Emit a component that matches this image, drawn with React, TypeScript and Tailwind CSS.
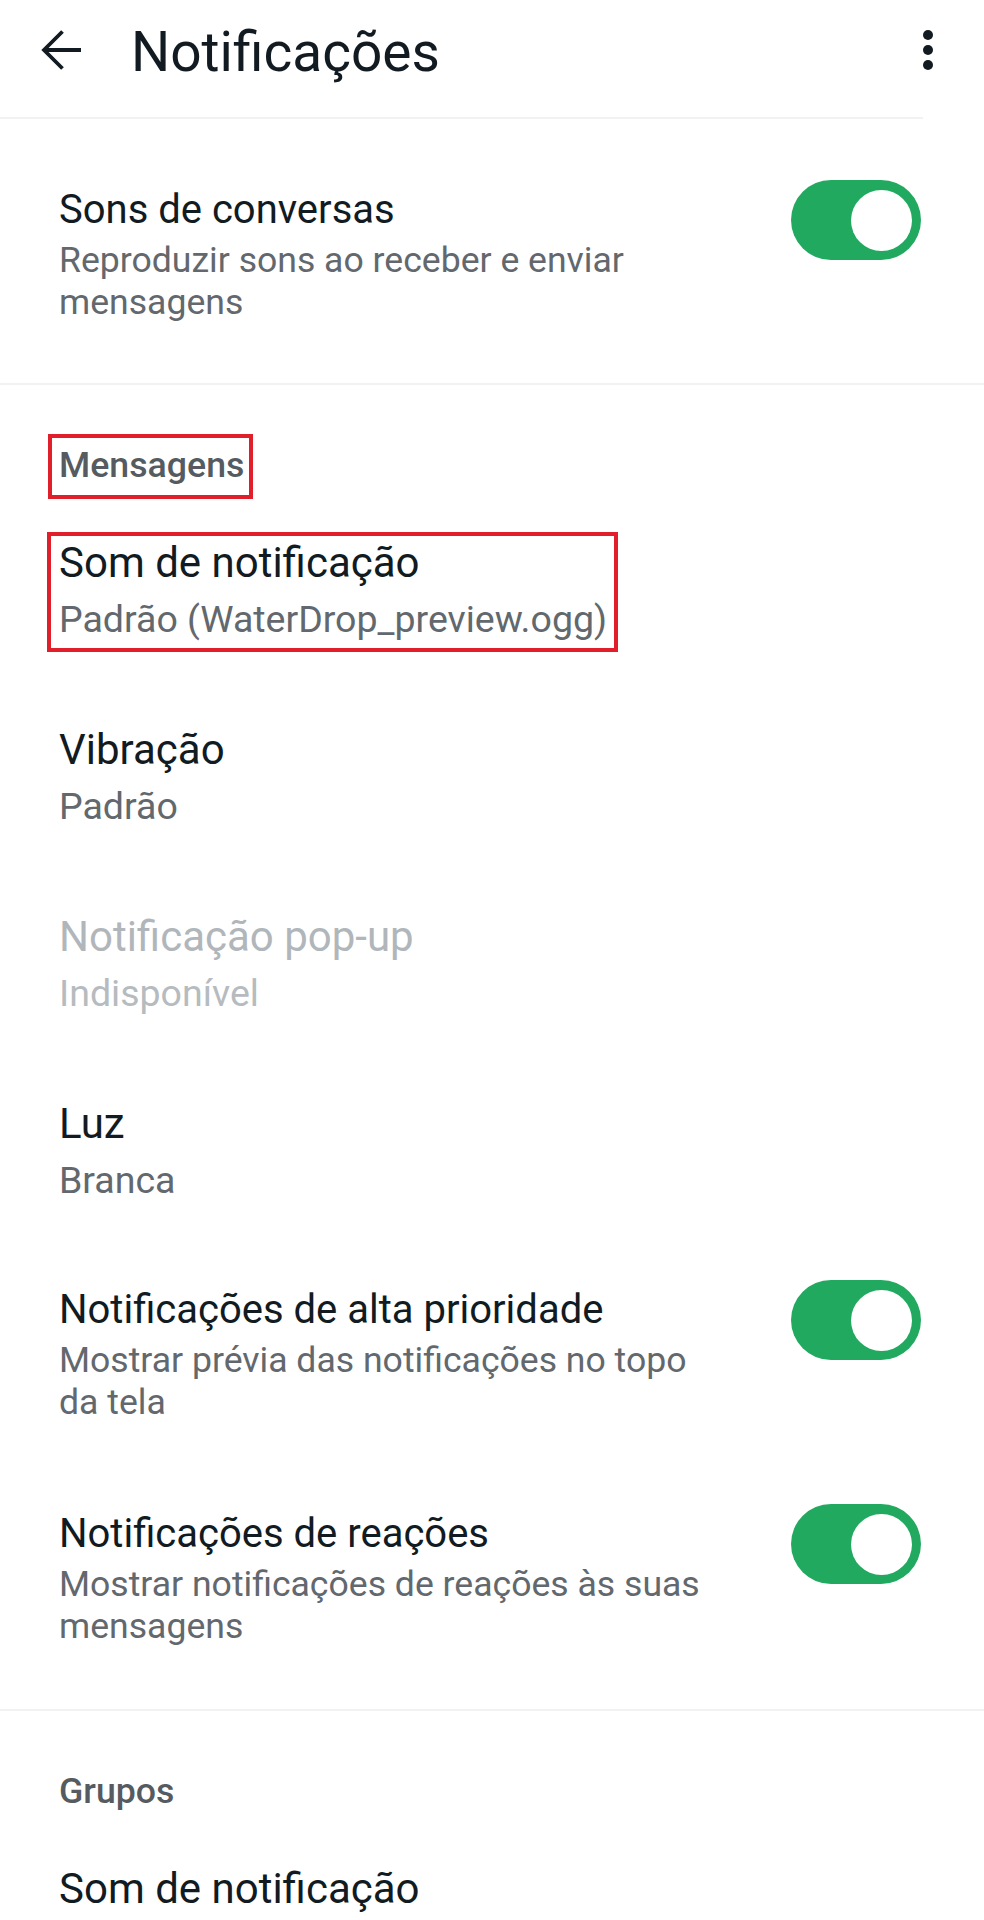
import React from 'react';

interface RowProps {
  title: string;
  sub: string;
  pad?: string;
}

function Toggle() {
  return (
    <div className="w-[130px] h-[80px] shrink-0 rounded-full bg-[#21a95f] flex items-center justify-end pr-[9px] -mt-[5px]">
      <div className="size-[61px] rounded-full bg-white" />
    </div>
  );
}

function SwitchRow({ title, sub, pad = 'pt-[41px] pb-[45px]' }: RowProps) {
  return (
    <div className={`flex items-start pl-[59px] pr-[63px] ${pad}`}>
      <div className="flex-1 max-w-[662px]">
        <p className="text-[40px] leading-[50px] text-[#111b21]">{title}</p>
        <p className="mt-[4px] text-[35.6px] leading-[42px] text-[#62686d]">{sub}</p>
      </div>
      <div className="ml-auto">
        <Toggle />
      </div>
    </div>
  );
}

function Item({ title, sub, disabled }: { title: string; sub?: string; disabled?: boolean }) {
  return (
    <div className="pl-[59px] pt-[41px] pb-[42px]">
      <p className={`text-[42px] leading-[52px] ${disabled ? 'text-[#b1b6ba]' : 'text-[#111b21]'}`}>{title}</p>
      {sub && (
        <p className={`mt-[8px] text-[37.5px] leading-[44px] ${disabled ? 'text-[#b6bbbf]' : 'text-[#62686d]'}`}>{sub}</p>
      )}
    </div>
  );
}

function SectionTitle({ children }: { children: React.ReactNode }) {
  return <p className="pl-[59px] pt-[59px] pb-[10px] text-[35.7px] leading-[42px] font-medium text-[#555b60]">{children}</p>;
}

function Divider() {
  return <div className="h-[2px] bg-[#f0f2f4]" />;
}

export default function App() {
  return (
    <div className="w-[984px] h-[1920px] overflow-hidden bg-white font-[Roboto,sans-serif]">
      {/* Toolbar */}
      <header>
        <div className="h-[117px] flex items-center pb-[14px]">
          <svg className="ml-[41px] -mt-[4px] shrink-0" width="40" height="40" viewBox="0 0 40 40" fill="none" stroke="#111b21" strokeWidth="3.8">
            <path d="M3 20H40" />
            <path d="M21.5 1.5L3 20l18.5 18.5" />
          </svg>
          <h1 className="ml-[50px] text-[55px] leading-[64px] text-[#111b21]">Notificações</h1>
          <div className="ml-auto mr-[51px] -mt-[4px] flex flex-col gap-[5px]">
            <span className="size-[10px] rounded-full bg-[#111b21]" />
            <span className="size-[10px] rounded-full bg-[#111b21]" />
            <span className="size-[10px] rounded-full bg-[#111b21]" />
          </div>
        </div>
        <div className="w-[923px] h-[2px] bg-[#f0f2f4]" />
      </header>

      <SwitchRow
        title="Sons de conversas"
        sub="Reproduzir sons ao receber e enviar mensagens"
        pad="pt-[66px] pb-[60px]"
      />
      <Divider />

      {/* Mensagens */}
      <section className="pb-[17px]">
        <SectionTitle>
          <span className="relative inline-block">
            Mensagens
            <span className="absolute -left-[11px] -right-[9px] -top-[10px] -bottom-[13px] border-4 border-[#e11f2b]" />
          </span>
        </SectionTitle>

        <div className="pl-[59px] pt-[41px] pb-[42px]">
          <div className="relative inline-block">
            <p className="text-[42px] leading-[52px] text-[#111b21]">Som de notificação</p>
            <p className="mt-[8px] text-[37.5px] leading-[44px] text-[#62686d]">Padrão (WaterDrop_preview.ogg)</p>
            <span className="absolute -left-[12px] -right-[11px] -top-[5px] -bottom-[11px] border-4 border-[#e11f2b]" />
          </div>
        </div>

        <Item title="Vibração" sub="Padrão" />
        <Item title="Notificação pop-up" sub="Indisponível" disabled />
        <Item title="Luz" sub="Branca" />

        <SwitchRow
          title="Notificações de alta prioridade"
          sub="Mostrar prévia das notificações no topo da tela"
        />
        <SwitchRow
          title="Notificações de reações"
          sub="Mostrar notificações de reações às suas mensagens"
        />
      </section>
      <Divider />

      {/* Grupos */}
      <section>
        <SectionTitle>Grupos</SectionTitle>
        <Item title="Som de notificação" />
      </section>
    </div>
  );
}
